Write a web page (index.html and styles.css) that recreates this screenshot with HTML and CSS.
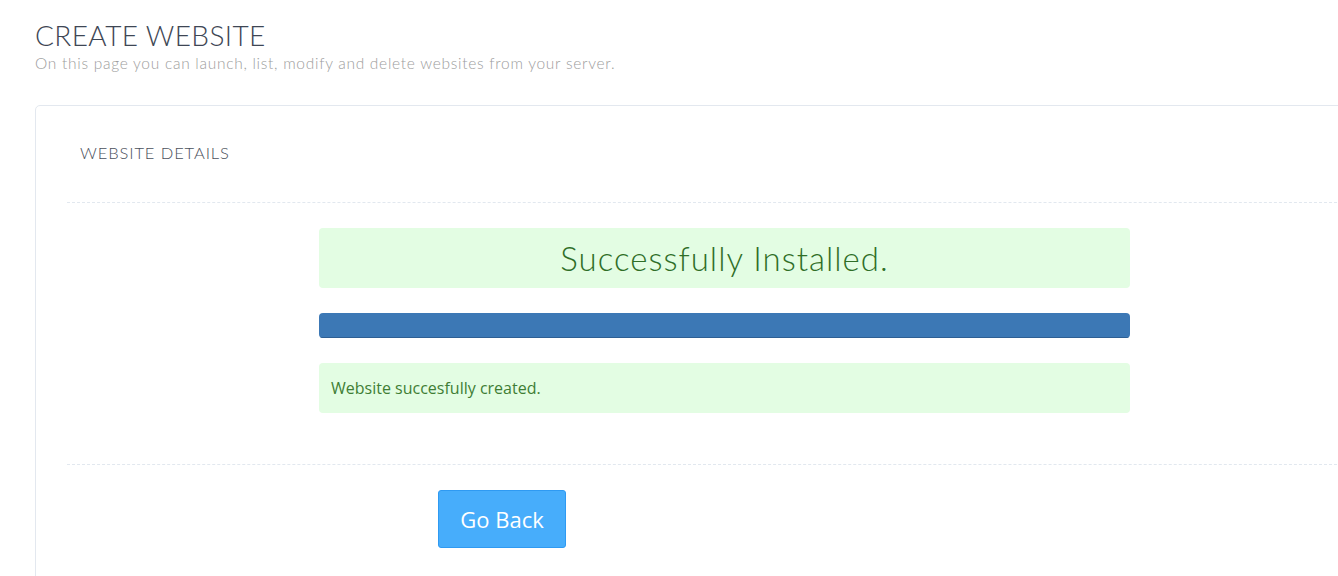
FILE: index.html
```html
<!DOCTYPE html>
<html lang="en">
<head>
<meta charset="utf-8">
<title>Create Website</title>
<link rel="stylesheet" href="styles.css">
</head>
<body>
<div class="page">
  <header class="page-head">
    <h1 class="page-title">CREATE WEBSITE</h1>
    <p class="page-sub">On this page you can launch, list, modify and delete websites from your server.</p>
  </header>
  <section class="card">
    <div class="card-head">
      <h2 class="card-title">WEBSITE DETAILS</h2>
    </div>
    <div class="divider"></div>
    <div class="card-body">
      <div class="col">
        <div class="alert alert-big">Successfully Installed.</div>
        <div class="progress"><div class="progress-bar" style="width:100%"></div></div>
        <div class="alert alert-small">Website succesfully created.</div>
      </div>
    </div>
    <div class="divider"></div>
    <div class="card-foot">
      <button class="btn" type="button">Go Back</button>
    </div>
  </section>
</div>
</body>
</html>
```

FILE: styles.css
```css
html, body {
  margin: 0;
  padding: 0;
  background: #ffffff;
  overflow: hidden;
}
body {
  font-family: "Lato", "Open Sans", sans-serif;
}
.page {
  padding: 19px 0 0 35px;
}
.page-head {
  margin: 0;
}
.page-title {
  margin: 0;
  font-family: "Lato", sans-serif;
  font-weight: 300;
  font-size: 28px;
  line-height: 32px;
  color: #3e4654;
  letter-spacing: 0.4px;
}
.page-sub {
  margin: 3px 0 0 0;
  font-family: "Lato", sans-serif;
  font-weight: 300;
  font-size: 15.5px;
  line-height: 18px;
  color: #9d9d9d;
  letter-spacing: 0.72px;
}
.card {
  margin-top: 33px;
  width: 1360px;
  border: 1px solid #e3e8ef;
  border-radius: 5px;
  background: #fff;
  min-height: 480px;
}
.card-head {
  height: 96px;
  display: flex;
  align-items: center;
  padding-left: 44px;
}
.card-title {
  margin: 0;
  font-family: "Lato", sans-serif;
  font-weight: 300;
  font-size: 16.5px;
  line-height: 18px;
  color: #4b515c;
  letter-spacing: 0.9px;
  padding-bottom: 3px;
}
.divider {
  margin: 0 0 0 31px;
  width: 1270px;
  border-top: 1px dashed #e2e8ef;
}
.card-body {
  padding: 25px 0 51px 283px;
}
.col {
  width: 811px;
  display: flex;
  flex-direction: column;
  gap: 25px;
}
.alert {
  background: #e3fde3;
  border-radius: 4px;
  color: #3b7a30;
}
.alert-big {
  height: 60px;
  display: flex;
  align-items: center;
  justify-content: center;
  font-family: "Lato", sans-serif;
  font-weight: 300;
  font-size: 33px;
  color: #2f6e27;
  letter-spacing: 1px;
}
.alert-small {
  height: 50px;
  display: flex;
  align-items: center;
  padding-left: 12px;
  font-family: "Open Sans", sans-serif;
  font-size: 16px;
  color: #3f7d35;
}
.progress {
  height: 25px;
  border-radius: 4px;
  background: #f5f5f5;
  overflow: hidden;
}
.progress-bar {
  height: 100%;
  background: #3c78b5;
  box-shadow: inset 0 -1px 0 #2e5f93;
}
.card-foot {
  padding: 25px 0 40px 402px;
}
.btn {
  width: 128px;
  height: 58px;
  border: 1px solid #2f9af2;
  border-radius: 3px;
  background: #47adfb;
  color: #ffffff;
  font-family: "Open Sans", sans-serif;
  font-size: 22px;
  padding: 0;
  cursor: pointer;
}
```
